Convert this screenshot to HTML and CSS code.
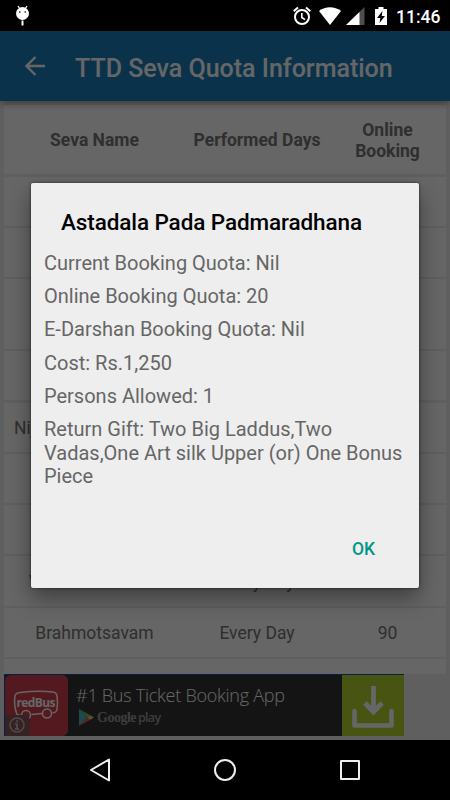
FILE: index.html
```
<!DOCTYPE html>
<html lang="en">
<head>
  <meta charset="UTF-8" />
  <meta name="viewport" content="width=device-width, initial-scale=1.0"/>
  <title>TTD Seva Quota Information</title>
  <link rel="stylesheet" href="styles.css">
</head>
<body>
  <div class="status-bar">
    <svg class="debug-icon" width="16" height="22" viewBox="0 0 16 22">
      <path d="M3 1l2 3M12 1l-2 3" stroke="#fff" stroke-width="1.3"/>
      <ellipse cx="7.500" cy="8.5" rx="6.5" ry="6.5" fill="#fff"/>
      <circle cx="4.800" cy="7" r=".8"/><circle cx="10.200" cy="7" r=".8"/>
      <path d="M7.500 15.500v5" stroke="#fff" stroke-width="2"/>
    </svg>
    <div class="status-right">
      <svg width="18" height="20" viewBox="0 0 18 20" fill="none" stroke="#fff">
        <circle cx="9" cy="11" r="7" stroke-width="2"/>
        <path d="M.7 5.2L5 1.6M17.3 5.2L13 1.6" stroke-width="2"/>
        <path d="M8.8 7v4.5l3.2 2.2" stroke-width="1.6"/>
      </svg>
      <svg class="wifi" width="22" height="20" viewBox="0 0 22 20">
        <path d="M11 19L0 5C6.500 0 15.500 0 22 5z" fill="#fff"/>
      </svg>
      <svg class="signal" width="19" height="20" viewBox="0 0 19 20">
        <path d="M0 19L18.500 1v18z" fill="#4d4d4d"/>
        <path d="M0 19L13.500 5.900v13.100z" fill="#fff"/>
      </svg>
      <svg class="battery" width="12" height="20" viewBox="0 0 12 20">
        <path d="M3.500 1h5v2H12v16H0V3h3.500z" fill="#fff"/>
        <path d="M7.500 5L2 12h3.300L4.500 17 10 10H6.700z" fill="#000"/>
      </svg>
      <span class="clock">11:46</span>
    </div>
  </div>

  <div class="screen">
    <div class="app-bar">
      <svg width="20" height="20" viewBox="0 0 20 20" fill="none" stroke="#fff" stroke-width="2.3">
        <path d="M20 10H2M10.500 1L1.500 10l9 9"/>
      </svg>
      <h1>TTD Seva Quota Information</h1>
    </div>

    <div class="quota-table">
      <div class="row head">
        <div>Seva Name</div>
        <div>Performed Days</div>
        <div>Online<br>Booking</div>
      </div>
      <div class="row"></div>
      <div class="row"></div>
      <div class="row tall"></div>
      <div class="row"></div>
      <div class="row">
        <div class="start">Nij</div>
      </div>
      <div class="row"></div>
      <div class="row"></div>
      <div class="row">
        <div>Vasanthotsavam</div>
        <div>Every Day</div>
        <div>90</div>
      </div>
      <div class="row">
        <div>Brahmotsavam</div>
        <div>Every Day</div>
        <div>90</div>
      </div>
      <div class="row last"></div>
    </div>

    <div class="ad">
      <div class="ad-logo">
        <svg width="62" height="61" viewBox="0 0 62 61">
          <g fill="none" stroke="#fff" stroke-width="1.5">
            <path d="M15.500 40.500L12 39.500Q8.500 30 10 21Q10.500 18 15 17.500Q33 15.500 48 17Q51.500 17.500 52 21Q53 28 52 34.500Q51.500 37.500 47.500 38M37 38.500L26.500 39.500"/>
            <circle cx="21" cy="40" r="4.500"/>
            <circle cx="42" cy="38.500" r="4.500"/>
          </g>
          <text class="bus-name" x="11.500" y="31.500" textLength="39">redBus</text>
        </svg>
        <div class="ad-info">
          <svg width="16" height="16" viewBox="0 0 16 16" fill="none" stroke="#bbb" stroke-width="1.5">
            <circle cx="8" cy="8" r="7"/>
            <path d="M8 3.300v2M6 7.200h2V12M6 12h4" stroke-width="1.8"/>
          </svg>
        </div>
      </div>
      <div class="ad-text">
        <div class="ad-title">#1 Bus Ticket Booking App</div>
        <div class="ad-store">
          <svg width="16" height="17" viewBox="0 0 16 17">
            <path d="M1 0v17l8-8.500z" fill="#49b8c9"/>
            <path d="M1 0l11 6-3 2.500z" fill="#6cbc73"/>
            <path d="M12 6l4 2.500-4 2.500-3-2.500z" fill="#e6c84f"/>
            <path d="M1 17l11-6-3-2.500z" fill="#d95f55"/>
          </svg>
          <span class="google">Google</span><span class="play">play</span>
        </div>
      </div>
      <div class="ad-download">
        <svg width="44" height="44" viewBox="0 0 44 44" fill="none" stroke="#fff">
          <path d="M22.500 1v26M14 18l8.500 9 8.500-9" stroke-width="4.800"/>
          <path d="M3.500 26v14.500h37V26" stroke-width="4.500" stroke-linecap="round" stroke-linejoin="round"/>
        </svg>
      </div>
    </div>

    <div class="scrim">
      <div class="dialog">
        <h2>Astadala Pada Padmaradhana</h2>
        <p>Current Booking Quota: Nil</p>
        <p>Online Booking Quota: 20</p>
        <p>E-Darshan Booking Quota: Nil</p>
        <p>Cost: Rs.1,250</p>
        <p>Persons Allowed: 1</p>
        <p>Return Gift: Two Big Laddus,Two<br>Vadas,One Art silk Upper (or) One Bonus<br>Piece</p>
        <button class="ok">OK</button>
      </div>
    </div>
  </div>

  <div class="nav-bar">
    <svg width="24" height="24" viewBox="0 0 24 24"><path d="M21 1.500v21L3 12z"/></svg>
    <svg width="24" height="24" viewBox="0 0 24 24"><circle cx="12" cy="12" r="10"/></svg>
    <svg width="24" height="24" viewBox="0 0 24 24"><rect x="3" y="3" width="18" height="18"/></svg>
  </div>
</body>
</html>
```
FILE: styles.css
```
* {
  box-sizing: border-box;
}
body {
  margin: 0;
  width: 450px;
  height: 800px;
  overflow: hidden;
  background: #000;
  font-family: Roboto, sans-serif;
}
svg {
  display: block;
  flex: none;
}
.status-bar {
  height: 31px;
  padding: 0 10px 0 15px;
  display: flex;
  justify-content: space-between;
  align-items: center;
  color: #fff;
}
.status-right {
  display: flex;
  align-items: center;
}
.wifi { margin-left: 8px; }
.signal { margin-left: 5px; }
.battery { margin-left: 10px; }
.clock {
  margin-left: 9px;
  padding-top: 2px;
  width: 44px;
  font-size: 17.500px;
  font-weight: 500;
  white-space: nowrap;
}
.screen {
  position: relative;
  height: 709px;
  background: #ededed;
}
.app-bar {
  position: relative;
  height: 70px;
  padding: 0 25px;
  display: flex;
  align-items: center;
  gap: 30px;
  background: #1b80bb;
  color: #fff;
  box-shadow: 0 2px 8px rgba(0,0,0,0.4);
}
.app-bar h1 {
  margin: 5px 0 0;
  font-size: 25px;
  font-weight: 500;
  white-space: nowrap;
}
.quota-table {
  padding: 4px 4px 0;
  display: grid;
  gap: 2.2px;
}
.row {
  height: 49.100px;
  padding-top: 2px;
  display: grid;
  grid-template-columns: 181px 144px 117px;
  align-items: center;
  background: #fff;
  color: #757575;
  font-size: 17.500px;
  text-align: center;
  white-space: nowrap;
}
.head {
  height: 69.400px;
  line-height: 21px;
  font-weight: 700;
}
.start {
  padding-left: 10px;
  text-align: left;
}
.tall { height: 70px; }
.last { height: 15px; }
.ad {
  width: 400px;
  height: 62px;
  margin-left: 4px;
  display: flex;
  background: #333;
  border-top: 1px solid #0a50b4;
  border-left: 1px solid #0a50b4;
}
.ad-logo {
  position: relative;
  width: 63px;
  background: #d0404c;
  border-radius: 6px;
}
.bus-name {
  font: 700 12px "Open Sans", sans-serif;
  fill: #fff;
}
.ad-info {
  position: absolute;
  left: 0;
  bottom: 0;
  width: 25px;
  height: 21px;
  padding: 2px 0 0 4px;
  background: #8a5458;
  border-radius: 0 6px 0 0;
}
.ad-text {
  flex: 1;
  padding: 8px 0 0 8px;
  color: #fff;
}
.ad-title {
  font: 300 18px/24px "Open Sans", sans-serif;
  letter-spacing: -0.25px;
  white-space: nowrap;
}
.ad-store {
  display: flex;
  align-items: center;
  margin: 2px 0 0 2px;
  color: #999;
  line-height: 17px;
}
.google {
  margin-left: 3px;
  font-family: "Liberation Serif", serif;
  font-size: 14px;
  font-weight: 700;
  letter-spacing: -0.5px;
}
.play {
  margin-left: 2px;
  font-family: "Open Sans", sans-serif;
  font-size: 12.500px;
  font-weight: 600;
  letter-spacing: -0.7px;
}
.ad-download {
  width: 62px;
  padding: 10px 0 0 9px;
  background: #b2d22d;
}
.scrim {
  position: absolute;
  inset: 0;
  display: flex;
  align-items: center;
  justify-content: center;
  background: rgba(0,0,0,0.6);
}
.dialog {
  width: 388px;
  height: 405px;
  padding: 24px 13px 0;
  display: flex;
  flex-direction: column;
  background: #eee;
  border-radius: 2px;
  box-shadow: 0 10px 22px rgba(0,0,0,0.4), 0 0 3px rgba(0,0,0,0.6);
}
.dialog h2 {
  margin: 0 0 15px 17px;
  font-size: 22.500px;
  line-height: 30px;
  font-weight: 500;
  letter-spacing: -0.1px;
  color: #000;
  white-space: nowrap;
}
.dialog p {
  margin: 0 0 9.500px;
  font-size: 20px;
  line-height: 23.700px;
  color: #666;
  white-space: nowrap;
}
.ok {
  align-self: flex-end;
  margin: auto 31px 28px 0;
  padding: 0;
  border: none;
  background: none;
  font: 500 17.500px/22px Roboto, sans-serif;
  color: #009688;
}
.nav-bar {
  height: 60px;
  padding: 0 88px;
  display: flex;
  align-items: center;
  justify-content: space-between;
}
.nav-bar svg {
  fill: none;
  stroke: #eee;
  stroke-width: 2;
  stroke-linejoin: round;
}
```
